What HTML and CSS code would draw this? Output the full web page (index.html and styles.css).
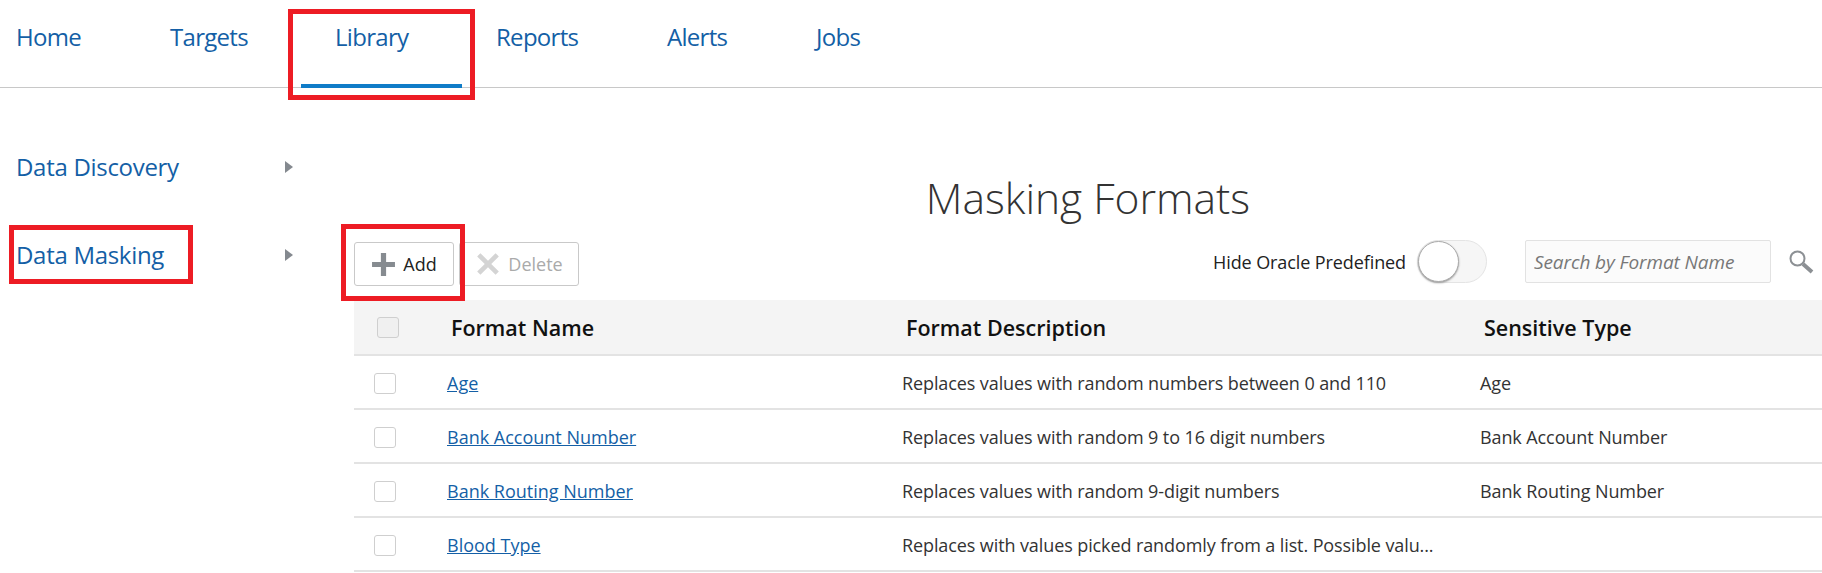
FILE: index.html
```html
<!DOCTYPE html>
<html lang="en">
<head>
  <meta charset="UTF-8" />
  <title>Masking Formats</title>
  <link rel="stylesheet" href="styles.css">
</head>
<body>
  <nav class="topnav">
    <a class="nav-item">Home</a>
    <a class="nav-item">Targets</a>
    <a class="nav-item active">Library</a>
    <a class="nav-item">Reports</a>
    <a class="nav-item">Alerts</a>
    <a class="nav-item">Jobs</a>
  </nav>

  <div class="page">
    <aside class="sidebar">
      <div class="side-item"><a>Data Discovery</a><span class="arrow"></span></div>
      <div class="side-item"><a>Data Masking</a><span class="arrow"></span></div>
    </aside>

    <main class="content">
      <h1>Masking Formats</h1>

      <div class="toolbar">
        <button class="btn" type="button">
          <svg width="25" height="25" viewBox="0 0 24 24"><path d="M9.500 1h5v8.500h8.500v5h-8.500v8.500h-5v-8.500h-8.500v-5h8.500z" fill="#868b90"/></svg>
          Add
        </button>
        <button class="btn disabled" type="button">
          <svg width="26" height="26" viewBox="0 0 24 24"><path d="M2 5l3-3 7 7 7-7 3 3-7 7 7 7-3 3-7-7-7 7-3-3 7-7z" fill="#d4d4d4"/></svg>
          Delete
        </button>
        <div class="tools-right">
          <span class="toggle-label">Hide Oracle Predefined</span>
          <span class="toggle"><span class="knob"></span></span>
          <input class="search" type="text" placeholder="Search by Format Name" />
          <svg class="search-icon" width="26" height="26" viewBox="0 0 26 26">
            <circle cx="9.500" cy="9.500" r="7" fill="none" stroke="#8c9094" stroke-width="2"/>
            <path d="M15 15l9 8" stroke="#8c9094" stroke-width="4" fill="none"/>
          </svg>
        </div>
      </div>

      <div class="grid">
        <div class="row head">
          <div class="cell-check"><span class="check"></span></div>
          <div class="cell-name">Format Name</div>
          <div class="cell-desc">Format Description</div>
          <div class="cell-type">Sensitive Type</div>
        </div>
        <div class="row">
          <div class="cell-check"><span class="check"></span></div>
          <div class="cell-name"><a href="#">Age</a></div>
          <div class="cell-desc">Replaces values with random numbers between 0 and 110</div>
          <div class="cell-type">Age</div>
        </div>
        <div class="row">
          <div class="cell-check"><span class="check"></span></div>
          <div class="cell-name"><a href="#">Bank Account Number</a></div>
          <div class="cell-desc">Replaces values with random 9 to 16 digit numbers</div>
          <div class="cell-type">Bank Account Number</div>
        </div>
        <div class="row">
          <div class="cell-check"><span class="check"></span></div>
          <div class="cell-name"><a href="#">Bank Routing Number</a></div>
          <div class="cell-desc">Replaces values with random 9-digit numbers</div>
          <div class="cell-type">Bank Routing Number</div>
        </div>
        <div class="row">
          <div class="cell-check"><span class="check"></span></div>
          <div class="cell-name"><a href="#">Blood Type</a></div>
          <div class="cell-desc">Replaces with values picked randomly from a list. Possible valu...</div>
          <div class="cell-type"></div>
        </div>
      </div>
    </main>
  </div>

  <!-- red callouts drawn on top of the screenshot -->
  <div class="callout callout-library"></div>
  <div class="callout callout-masking"></div>
  <div class="callout callout-add"></div>
</body>
</html>
```

FILE: styles.css
```css
html, body {
  height: 573px;
  overflow: hidden;
}

body {
  margin: 0;
  position: relative;
  font-family: "Open Sans", sans-serif;
  background: #fff;
  color: #333;
}

.topnav {
  display: flex;
  height: 87px;
  border-bottom: 1px solid #c8c8c8;
}

.nav-item {
  box-sizing: border-box;
  padding: 20px 0 0;
  font-size: 24px;
  letter-spacing: -0.7px;
  color: #145fa6;
}

.nav-item:nth-child(1) { margin-left: 16px; width: 154px; }
.nav-item:nth-child(2) { width: 131px; }
.nav-item:nth-child(3) {
  width: 161px;
  padding-left: 34px;
  height: 88px;
  border-bottom: 4px solid #0f7cc8;
  margin-right: 34px;
}
.nav-item:nth-child(4) { width: 171px; }
.nav-item:nth-child(5) { width: 149px; }

.page {
  display: flex;
}

.sidebar {
  box-sizing: border-box;
  width: 354px;
  padding: 54px 61px 0 16px;
}

.side-item {
  display: flex;
  justify-content: space-between;
  align-items: center;
  font-size: 24px;
  letter-spacing: -0.3px;
  color: #145fa6;
  height: 48px;
  margin-bottom: 40px;
}

.arrow {
  width: 0;
  height: 0;
  margin-top: 2px;
  border-left: 8px solid #84898f;
  border-top: 6px solid transparent;
  border-bottom: 6px solid transparent;
}

.content {
  flex: 1;
  min-width: 0;
}

h1 {
  margin: 83px 0 0;
  height: 68px;
  line-height: 54px;
  text-align: center;
  font-size: 42.500px;
  font-weight: 300;
  color: #333;
}

.toolbar {
  display: flex;
  align-items: flex-end;
  gap: 5px;
  height: 47px;
}

.btn {
  display: flex;
  align-items: center;
  justify-content: center;
  gap: 7px;
  box-sizing: border-box;
  width: 100px;
  height: 44px;
  padding: 0;
  background: #fff;
  border: 1px solid #c9c9c9;
  border-radius: 3px;
  font-family: inherit;
  font-size: 18px;
  letter-spacing: 0;
  color: #222;
}

.btn.disabled {
  width: 120px;
  color: #aaa;
}

.tools-right {
  display: flex;
  align-items: center;
  align-self: flex-start;
  margin-top: 1px;
  margin-left: auto;
}

.toggle-label {
  font-size: 18px;
  letter-spacing: -0.1px;
  color: #222;
}

.toggle {
  box-sizing: border-box;
  display: block;
  position: relative;
  width: 70px;
  height: 43px;
  margin: 0 38px 0 11px;
  background: #f6f6f6;
  border: 1px solid #e4e4e4;
  border-radius: 22px;
}

.knob {
  position: absolute;
  left: 0;
  top: 0;
  box-sizing: border-box;
  width: 41px;
  height: 41px;
  background: #fff;
  border: 1px solid #aaa;
  border-radius: 50%;
  box-shadow: 0 1px 2px #999;
}

.search {
  box-sizing: border-box;
  width: 246px;
  height: 43px;
  padding: 0 8px;
  background: #fbfbfb;
  border: 1px solid #e2e2e2;
  border-radius: 2px;
  font-family: inherit;
  font-size: 19px;
  font-style: italic;
  letter-spacing: -0.1px;
}

.search::placeholder {
  color: #777;
}

.search-icon {
  margin: 0 8px 0 17px;
}

.grid {
  margin-top: 14px;
}

.row {
  display: grid;
  grid-template-columns: 93px 455px 578px 1fr;
  align-items: center;
  box-sizing: border-box;
  height: 54px;
  padding-top: 2px;
  border-bottom: 2px solid #e3e3e3;
  font-size: 18px;
  letter-spacing: -0.1px;
  white-space: nowrap;
}

.row.head {
  height: 56px;
  padding-top: 0;
  background: #f4f4f4;
  font-size: 21.500px;
  font-weight: 600;
  letter-spacing: 0;
  color: #111;
}

.row.head .cell-name,
.row.head .cell-desc,
.row.head .cell-type {
  padding-left: 4px;
}

.cell-check {
  padding-left: 20px;
  display: flex;
}

.check {
  box-sizing: border-box;
  display: block;
  width: 22px;
  height: 21px;
  background: #fff;
  border: 1px solid #cfcfcf;
  border-radius: 3px;
}

.head .check {
  margin-left: 3px;
  background: #f0f0f0;
}

.cell-name a {
  color: #145fa6;
  letter-spacing: 0;
}

.callout {
  position: absolute;
  box-sizing: border-box;
  border: 5px solid #ed1c24;
}

.callout-library {
  left: 288px;
  top: 9px;
  width: 187px;
  height: 91px;
}

.callout-masking {
  left: 9px;
  top: 225px;
  width: 184px;
  height: 59px;
}

.callout-add {
  left: 341px;
  top: 224px;
  width: 124px;
  height: 77px;
}
```
